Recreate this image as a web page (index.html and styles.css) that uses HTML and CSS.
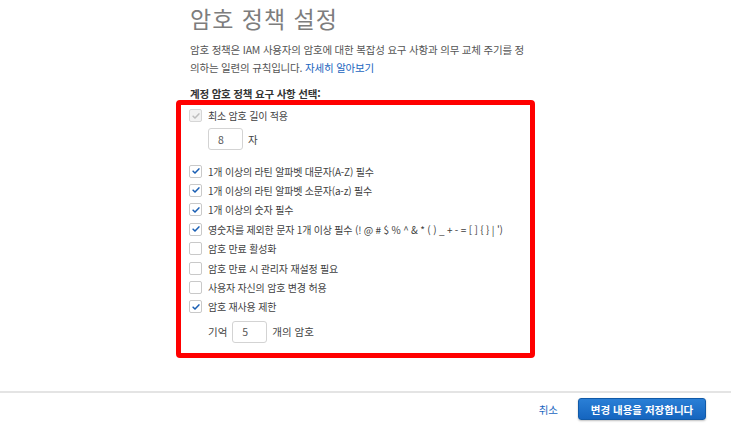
FILE: index.html
```html
<!DOCTYPE html>
<html lang="ko">
<head>
  <meta charset="UTF-8" />
  <title>암호 정책 설정</title>
  <link rel="stylesheet" href="styles.css">
</head>
<body>
  <div class="page">
    <h1>암호 정책 설정</h1>
    <p class="desc">암호 정책은 IAM 사용자의 암호에 대한 복잡성 요구 사항과 의무 교체 주기를 정의하는 일련의 규칙입니다. <a href="#">자세히 알아보기</a></p>
    <div class="label">계정 암호 정책 요구 사항 선택:</div>

    <div class="policy">
      <div class="row"><span class="cb disabled"><svg viewBox="0 0 12 12"><path d="M2.5 6.2l2.3 2.3 4.7-5"/></svg></span>최소 암호 길이 적용</div>
      <div class="sub"><span class="num">8</span>자</div>

      <div class="row"><span class="cb on"><svg viewBox="0 0 12 12"><path d="M2.5 6.2l2.3 2.3 4.7-5"/></svg></span>1개 이상의 라틴 알파벳 대문자(A-Z) 필수</div>
      <div class="row"><span class="cb on"><svg viewBox="0 0 12 12"><path d="M2.5 6.2l2.3 2.3 4.7-5"/></svg></span>1개 이상의 라틴 알파벳 소문자(a-z) 필수</div>
      <div class="row"><span class="cb on"><svg viewBox="0 0 12 12"><path d="M2.5 6.2l2.3 2.3 4.7-5"/></svg></span>1개 이상의 숫자 필수</div>
      <div class="row"><span class="cb on"><svg viewBox="0 0 12 12"><path d="M2.5 6.2l2.3 2.3 4.7-5"/></svg></span>영숫자를 제외한 문자 1개 이상 필수 (! @ # $ % ^ &amp; * ( ) _ + - = [ ] { } | ')</div>
      <div class="row"><span class="cb"></span>암호 만료 활성화</div>
      <div class="row"><span class="cb"></span>암호 만료 시 관리자 재설정 필요</div>
      <div class="row"><span class="cb"></span>사용자 자신의 암호 변경 허용</div>
      <div class="row"><span class="cb on"><svg viewBox="0 0 12 12"><path d="M2.5 6.2l2.3 2.3 4.7-5"/></svg></span>암호 재사용 제한</div>
      <div class="sub sub-last">기억<span class="num">5</span>개의 암호</div>
    </div>
  </div>

  <div class="footer">
    <a href="#" class="cancel">취소</a>
    <button class="save">변경 내용을 저장합니다</button>
  </div>
</body>
</html>
```

FILE: styles.css
```css
body {
  margin: 0;
  background: #ffffff;
  font-family: "Noto Sans CJK KR", "Liberation Sans", sans-serif;
  color: #444;
  width: 731px;
  height: 427px;
  overflow: hidden;
}
.page {
  padding: 2px 0 0 190px;
  height: 389px;
}
h1 {
  margin: 0;
  font-size: 23px;
  font-weight: 400;
  color: #7d7d7d;
  letter-spacing: 1px;
  line-height: 32px;
}
.desc {
  margin: 7px 0 0 0;
  width: 340px;
  font-size: 10.5px;
  line-height: 18px;
  height: 36px;
  color: #555;
  letter-spacing: -0.2px;
}
.desc a {
  color: #1a66c0;
  text-decoration: none;
}
.label {
  margin-top: 10px;
  font-size: 10.5px;
  font-weight: 700;
  color: #333;
  line-height: 14px;
  letter-spacing: -0.2px;
}
.policy {
  margin: -1px 0 0 -14px;
  width: 341px;
  border: 5px solid #ff0000;
  border-radius: 4px;
  padding: 1px 0 0 8px;
  height: 247px;
}
.row {
  display: flex;
  align-items: center;
  height: 19.4px;
  font-size: 10px;
  color: #3f3f3f;
  letter-spacing: -0.2px;
}
.cb {
  width: 11px;
  height: 11px;
  border: 1px solid #c9c9c9;
  border-radius: 2px;
  background: #fff;
  margin-right: 6px;
  display: flex;
  align-items: center;
  justify-content: center;
  flex-shrink: 0;
}
.cb svg {
  width: 10px;
  height: 10px;
  fill: none;
  stroke: #1a5fb4;
  stroke-width: 1.8;
  stroke-linecap: round;
  stroke-linejoin: round;
}
.cb.disabled {
  background: #f2f2f2;
  border-color: #d6d6d6;
}
.cb.disabled svg {
  stroke: #bdbdbd;
}
.sub {
  display: flex;
  align-items: center;
  gap: 5px;
  padding-left: 19px;
  margin: 3px 0 11px 0;
  font-size: 10.5px;
  color: #444;
}
.sub-last {
  margin: 4px 0 0 0;
}
.num {
  display: inline-flex;
  align-items: center;
  width: 24px;
  height: 20px;
  padding-left: 9px;
  border: 1px solid #d3d3d3;
  border-radius: 3px;
  font-size: 10.5px;
  color: #555;
}
.footer {
  border-top: 2px solid #e4e4e4;
  display: flex;
  justify-content: flex-end;
  align-items: center;
  gap: 20px;
  padding: 5px 25px 0 0;
}
.cancel {
  color: #1a66c0;
  font-size: 10.5px;
  text-decoration: none;
}
.save {
  width: 128px;
  height: 22px;
  background: #1f70c9;
  background: linear-gradient(#2a7fd6, #1565bf);
  border: 1px solid #115aa8;
  border-radius: 3px;
  color: #fff;
  font-family: "Noto Sans CJK KR", "Liberation Sans", sans-serif;
  font-size: 10.5px;
  font-weight: 700;
  padding: 0;
  box-shadow: 0 1px 2px rgba(0, 0, 0, 0.25);
}
```
